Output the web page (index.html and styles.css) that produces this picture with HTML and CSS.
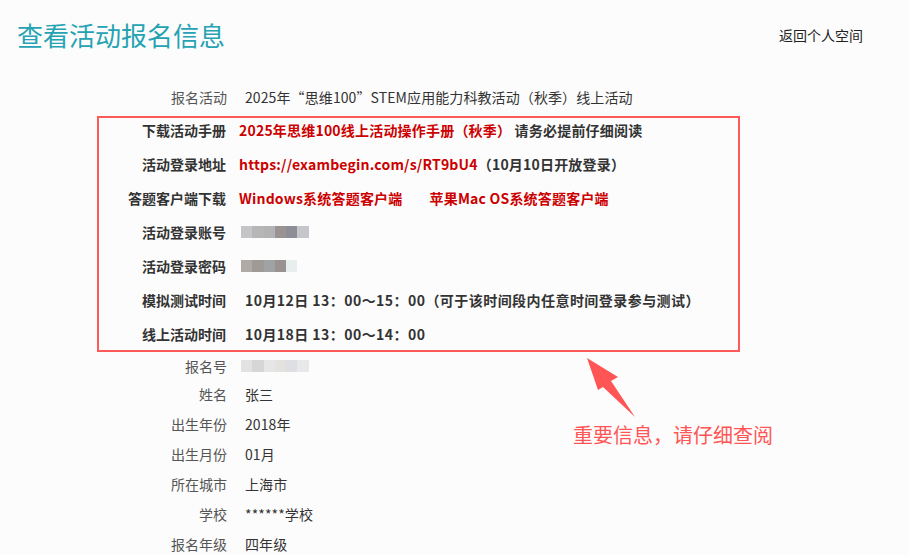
FILE: index.html
```html
<!DOCTYPE html>
<html lang="zh-CN">
<head>
    <meta charset="UTF-8">
    <meta name="viewport" content="width=device-width, initial-scale=1.0">
    <title>查看活动报名信息</title>
    <link rel="stylesheet" href="styles.css">
</head>
<body>
    <div class="page">
        <div class="header">
            <h1>查看活动报名信息</h1>
            <a href="#" class="back">返回个人空间</a>
        </div>

        <div class="info">
            <div class="row">
                <span class="label">报名活动</span>
                <span class="value">2025年“思维100”STEM应用能力科教活动（秋季）线上活动</span>
            </div>

            <div class="important">
                <div class="row">
                    <span class="label">下载活动手册</span>
                    <span class="value"><a href="#" class="red">2025年思维100线上活动操作手册（秋季）</a> 请务必提前仔细阅读</span>
                </div>
                <div class="row">
                    <span class="label">活动登录地址</span>
                    <span class="value"><a href="#" class="red">https://exambegin.com/s/RT9bU4</a>（10月10日开放登录）</span>
                </div>
                <div class="row">
                    <span class="label">答题客户端下载</span>
                    <span class="value"><a href="#" class="red">Windows系统答题客户端</a><a href="#" class="red client">苹果Mac OS系统答题客户端</a></span>
                </div>
                <div class="row">
                    <span class="label">活动登录账号</span>
                    <span class="value mosaic">
                        <i style="background:#c4c4c6"></i><i style="background:#b6b6b6"></i><i style="background:#b3b3b3"></i><i style="background:#9b9393"></i><i style="background:#8e8e96"></i><i style="background:#c6c6ca"></i>
                    </span>
                </div>
                <div class="row">
                    <span class="label">活动登录密码</span>
                    <span class="value mosaic">
                        <i style="background:#b0aaa6"></i><i style="background:#a09a97"></i><i style="background:#9fa3a3"></i><i style="background:#9a9290"></i><i style="background:#e8eeee"></i>
                    </span>
                </div>
                <div class="row">
                    <span class="label">模拟测试时间</span>
                    <span class="value time">10月12日 13：00～15：00（可于该时间段内任意时间登录参与测试）</span>
                </div>
                <div class="row">
                    <span class="label">线上活动时间</span>
                    <span class="value time">10月18日 13：00～14：00</span>
                </div>
            </div>

            <div class="row regno">
                <span class="label">报名号</span>
                <span class="value mosaic light">
                    <i style="background:#e2e2e2"></i><i style="background:#d6d6d6"></i><i style="background:#e6e6e6"></i><i style="background:#e4e2de"></i><i style="background:#dedfe4"></i><i style="background:#e8e8ea"></i>
                </span>
            </div>
            <div class="row">
                <span class="label">姓名</span>
                <span class="value">张三</span>
            </div>
            <div class="row">
                <span class="label">出生年份</span>
                <span class="value">2018年</span>
            </div>
            <div class="row">
                <span class="label">出生月份</span>
                <span class="value">01月</span>
            </div>
            <div class="row">
                <span class="label">所在城市</span>
                <span class="value">上海市</span>
            </div>
            <div class="row">
                <span class="label">学校</span>
                <span class="value">******学校</span>
            </div>
            <div class="row">
                <span class="label">报名年级</span>
                <span class="value">四年级</span>
            </div>
        </div>

        <svg class="arrow" width="60" height="70" viewBox="0 0 60 70">
            <polygon points="1,1 32,20 25,24 49,60 17,30 12,33" fill="#ff5555"/>
        </svg>
        <div class="note">重要信息，请仔细查阅</div>
    </div>
</body>
</html>
```

FILE: styles.css
```css
body { margin: 0; background-color: #fcfcfc; color: #333; font-family: "Microsoft YaHei", "Noto Sans CJK SC", "Noto Sans", sans-serif; font-size: 14px; }
.page { position: relative; width: 909px; height: 555px; overflow: hidden; }
.header { display: flex; justify-content: space-between; align-items: center; padding: 17px 46px 0 17px; height: 36px; }
.header h1 { margin: 0; font-size: 26px; line-height: 36px; font-weight: normal; color: #25a3b3; }
.back { color: #222; text-decoration: none; font-size: 14px; }
.info { margin-top: 29px; }
.row { display: flex; align-items: center; height: 30px; line-height: 30px; }
.row.regno { height: 27px; }
.label { width: 227px; text-align: right; color: #555; flex-shrink: 0; }
.value { margin-left: 18px; white-space: nowrap; letter-spacing: 0.1px; }
.important { margin: 4px 0 0 97px; width: 639px; border: 2px solid #ff5a5a; padding-bottom: 4px; }
.important .row { height: 24px; line-height: 24px; margin-bottom: 10px; font-weight: bold; }
.important .row:last-child { margin-bottom: 0; }
.important .label { width: 127px; color: #333; }
.important .value { margin-left: 13px; color: #333; letter-spacing: 0.2px; }
.important .value.time { margin-left: 19px; letter-spacing: 0.45px; }
.red { color: #c00; text-decoration: none; }
.client { margin-left: 27px; }
.mosaic { display: flex; }
.important .value.mosaic { margin-left: 15px; }
.row .value.mosaic.light { margin-left: 14px; }
.mosaic i { display: block; width: 11.3px; height: 12px; }
.arrow { position: absolute; left: 586px; top: 357px; }
.note { position: absolute; left: 573px; top: 421px; font-size: 20px; line-height: 28px; color: #ff5555; }
```
